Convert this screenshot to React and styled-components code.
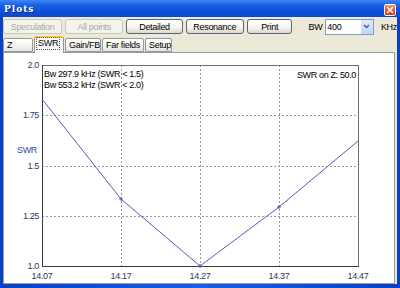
import styled, { createGlobalStyle } from "styled-components";

const GlobalStyle = createGlobalStyle`
  html, body {
    margin: 0;
    padding: 0;
    background: #ffffff;
  }
  * {
    box-sizing: border-box;
  }
`;

const Window = styled.div`
  width: 400px;
  height: 288px;
  display: flex;
  flex-direction: column;
  background: linear-gradient(90deg, #0841c8 0%, #1a5ee6 50%, #0841c8 100%);
  font-family: "Liberation Sans", Arial, sans-serif;
  font-size: 9px;
  letter-spacing: -0.3px;
  overflow: hidden;
`;

const TitleBar = styled.div`
  height: 17px;
  display: flex;
  align-items: center;
  justify-content: space-between;
  padding: 0 4px 0 4px;
  background: linear-gradient(180deg, #3d87f5 0%, #1c60e4 30%, #0a4fd8 70%, #0b49c7 100%);
`;

const Title = styled.span`
  color: #ffffff;
  font-family: "DejaVu Serif", "Liberation Serif", serif;
  font-weight: bold;
  font-size: 9px;
  letter-spacing: 1px;
  text-shadow: 1px 1px 0 #0a2a7a;
`;

const CloseButton = styled.div`
  width: 12px;
  height: 12px;
  margin-top: 2px;
  border: 1px solid #ffffff;
  border-radius: 2px;
  background: linear-gradient(180deg, #f0906a 0%, #e0522c 60%, #c83c1c 100%);
  display: flex;
  align-items: center;
  justify-content: center;
`;

const Client = styled.div`
  flex: 1;
  margin: 0 3px 4px 3px;
  background: #ece9d8;
  display: flex;
  flex-direction: column;
`;

const Toolbar = styled.div`
  display: flex;
  align-items: center;
  gap: 3px;
  padding-top: 2px;
  height: 17px;
`;

const Button = styled.div`
  width: ${(p) => p.$w}px;
  height: 15px;
  border: 1px solid ${(p) => (p.$disabled ? "#c9c7ba" : "#56677a")};
  border-radius: 3px;
  background: ${(p) =>
    p.$disabled
      ? "#f4f3ee"
      : "linear-gradient(180deg, #ffffff 0%, #f4f3ef 60%, #dcd8cc 100%)"};
  color: ${(p) => (p.$disabled ? "#aca899" : "#000000")};
  display: flex;
  align-items: center;
  justify-content: center;
  white-space: nowrap;
`;

const BwLabel = styled.span`
  margin-left: 13px;
  color: #000000;
`;

const Select = styled.div`
  width: 50px;
  height: 16px;
  border: 1px solid #7f9db9;
  background: #ffffff;
  display: flex;
  align-items: center;
  justify-content: space-between;
  padding-left: 1px;
`;

const SelectArrow = styled.div`
  width: 13px;
  height: 14px;
  background: linear-gradient(180deg, #dfe9fd 0%, #c2d4fb 100%);
  border-left: 1px solid #ffffff;
  display: flex;
  align-items: center;
  justify-content: center;
`;

const Unit = styled.span`
  margin-left: 4px;
  color: #000000;
`;

const TabStrip = styled.div`
  display: flex;
  align-items: flex-end;
  height: 18px;
`;

const Tab = styled.div`
  position: relative;
  z-index: ${(p) => (p.$active ? 2 : 1)};
  width: ${(p) => p.$w}px;
  height: ${(p) => (p.$active ? 17 : 14)}px;
  margin-right: 1px;
  margin-bottom: ${(p) => (p.$active ? -1 : 0)}px;
  padding-left: 2px;
  border: 1px solid #919b9c;
  border-bottom: ${(p) => (p.$active ? "none" : "1px solid #919b9c")};
  border-top: ${(p) => (p.$active ? "2px solid #ffc83c" : "1px solid #919b9c")};
  border-radius: 2px 2px 0 0;
  background: ${(p) =>
    p.$active ? "#fcfcfe" : "linear-gradient(180deg, #ffffff 0%, #f3f3ef 60%, #e6e5dd 100%)"};
  color: #000000;
  white-space: nowrap;
  display: flex;
  align-items: ${(p) => (p.$active ? "flex-start" : "center")};
`;

const TabText = styled.span`
  padding: 0 1px;
  line-height: 11px;
  outline: ${(p) => (p.$focus ? "1px dotted #555555" : "none")};
`;

const Panel = styled.div`
  flex: 1;
  margin-right: 2px;
  border: 1px solid #919b9c;
  background: #ffffff;
  display: flex;
`;

const Chart = styled.svg`
  width: 100%;
  height: 100%;
  display: block;
  font-family: "Liberation Sans", Arial, sans-serif;
  letter-spacing: -0.35px;
`;

const xs = [42, 121, 200, 279, 358];
const xLabels = ["14.07", "14.17", "14.27", "14.37", "14.47"];
const ys = [63, 113, 164, 214, 264];
const yLabels = ["2.0", "1.75", "1.5", "1.25", "1.0"];
const curve = [
  [42, 97],
  [121, 197],
  [200, 264],
  [279, 205],
  [358, 139],
];

function SwrChart() {
  return (
    <Chart viewBox="4 53 390 226">
      {xs.slice(1, 4).map((x) => (
        <line key={x} x1={x + 0.5} y1={63} x2={x + 0.5} y2={264} stroke="#9a9a9a" strokeDasharray="2 2" />
      ))}
      {ys.slice(1, 4).map((y) => (
        <line key={y} x1={42} y1={y + 0.5} x2={358} y2={y + 0.5} stroke="#9a9a9a" strokeDasharray="2 2" />
      ))}
      <rect x={42.5} y={63.5} width={316} height={201} fill="none" stroke="#6f6f6f" />
      <line x1={42} y1={264.5} x2={359} y2={264.5} stroke="#3a3a3a" />
      <line x1={42.5} y1={63} x2={42.5} y2={265} stroke="#3a3a3a" />
      <polyline
        points={curve.map((p) => p.join(",")).join(" ")}
        fill="none"
        stroke="#5a5ab8"
        strokeWidth="1"
      />
      {curve.slice(1, 4).map(([x, y]) => (
        <path key={x} d={`M${x - 2} ${y}h4M${x} ${y - 2}v4`} stroke="#5a5ab8" />
      ))}
      {yLabels.map((t, i) => (
        <text key={t} x={39} y={ys[i] + 3} fontSize="9" fill="#2c3a6a" textAnchor="end">
          {t}
        </text>
      ))}
      {xLabels.map((t, i) => (
        <text key={t} x={xs[i]} y={277} fontSize="9" fill="#2c3a5a" textAnchor="middle">
          {t}
        </text>
      ))}
      <text x={17} y={151} fontSize="9" fill="#2a4aa8">
        SWR
      </text>
      <text x={44} y={75} fontSize="9" fill="#000000">
        Bw 297.9 kHz (SWR &lt; 1.5)
      </text>
      <text x={44} y={86} fontSize="9" fill="#000000">
        Bw 553.2 kHz (SWR &lt; 2.0)
      </text>
      <text x={356} y={76} fontSize="9" fill="#000000" textAnchor="end">
        SWR on Z: 50.0
      </text>
    </Chart>
  );
}

export default function App() {
  return (
    <>
      <GlobalStyle />
      <Window>
        <TitleBar>
          <Title>Plots</Title>
          <CloseButton>
            <svg width="8" height="8" viewBox="0 0 8 8">
              <path d="M1 1L7 7M7 1L1 7" stroke="#ffffff" strokeWidth="1.6" />
            </svg>
          </CloseButton>
        </TitleBar>
        <Client>
          <Toolbar>
            <Button $w={61} $disabled>Speculation</Button>
            <Button $w={60} $disabled>All points</Button>
            <Button $w={58}>Detailed</Button>
            <Button $w={60}>Resonance</Button>
            <Button $w={47}>Print</Button>
            <BwLabel>BW</BwLabel>
            <Select>
              <span>400</span>
              <SelectArrow>
                <svg width="7" height="5" viewBox="0 0 7 5">
                  <path d="M1 1L3.5 3.5L6 1" stroke="#4d6185" strokeWidth="1.4" fill="none" />
                </svg>
              </SelectArrow>
            </Select>
            <Unit>KHz</Unit>
          </Toolbar>
          <TabStrip>
            <Tab $w={30}>
              <TabText>Z</TabText>
            </Tab>
            <Tab $w={30} $active>
              <TabText $focus>SWR</TabText>
            </Tab>
            <Tab $w={36}>
              <TabText>Gain/FB</TabText>
            </Tab>
            <Tab $w={42}>
              <TabText>Far fields</TabText>
            </Tab>
            <Tab $w={27}>
              <TabText>Setup</TabText>
            </Tab>
          </TabStrip>
          <Panel>
            <SwrChart />
          </Panel>
        </Client>
      </Window>
    </>
  );
}
